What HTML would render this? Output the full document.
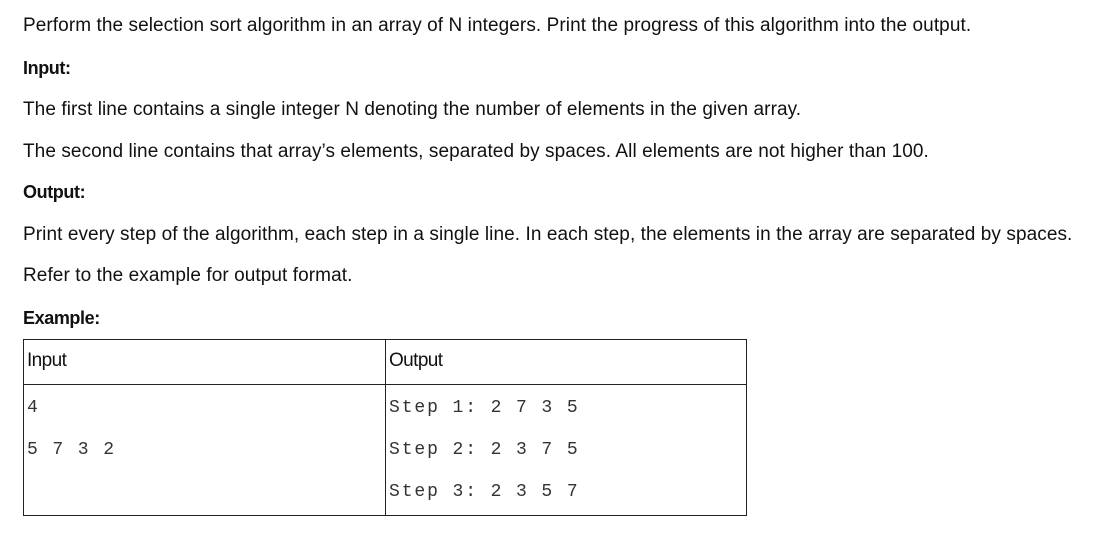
<!DOCTYPE html>
<html><head><meta charset="utf-8"><style>
body{margin:0;background:#fff;width:1111px;height:553px;overflow:hidden;font-family:"Liberation Sans",sans-serif;color:#111;}
.l{position:absolute;left:23px;font-size:19px;letter-spacing:0.08px;white-space:nowrap;line-height:20px}
.b{font-weight:bold;letter-spacing:-0.4px;font-size:18px}
table{position:absolute;left:23px;top:339px;width:724px;height:177px;border-collapse:collapse}
td{border:1.5px solid #222;vertical-align:top;padding:0 3px}
.h{font-size:19px;letter-spacing:-0.6px;height:44px;line-height:42px}
.m{font-family:"Liberation Mono",monospace;font-size:18px;letter-spacing:1.9px;color:#333;line-height:42px;padding-top:2px}
</style></head><body>
<div class="l" style="top:16px">Perform the selection sort algorithm in an array of N integers. Print the progress of this algorithm into the output.</div>
<div class="l b" style="top:58px">Input:</div>
<div class="l" style="top:100px">The first line contains a single integer N denoting the number of elements in the given array.</div>
<div class="l" style="top:142px">The second line contains that array’s elements, separated by spaces. All elements are not higher than 100.</div>
<div class="l b" style="top:182px">Output:</div>
<div class="l" style="top:225px">Print every step of the algorithm, each step in a single line. In each step, the elements in the array are separated by spaces.</div>
<div class="l" style="top:266px">Refer to the example for output format.</div>
<div class="l b" style="top:308px">Example:</div>
<table>
<tr><td class="h" style="width:355px">Input</td><td class="h">Output</td></tr>
<tr><td class="m">4<br>5 7 3 2</td><td class="m">Step 1: 2 7 3 5<br>Step 2: 2 3 7 5<br>Step 3: 2 3 5 7</td></tr>
</table>
</body></html>
